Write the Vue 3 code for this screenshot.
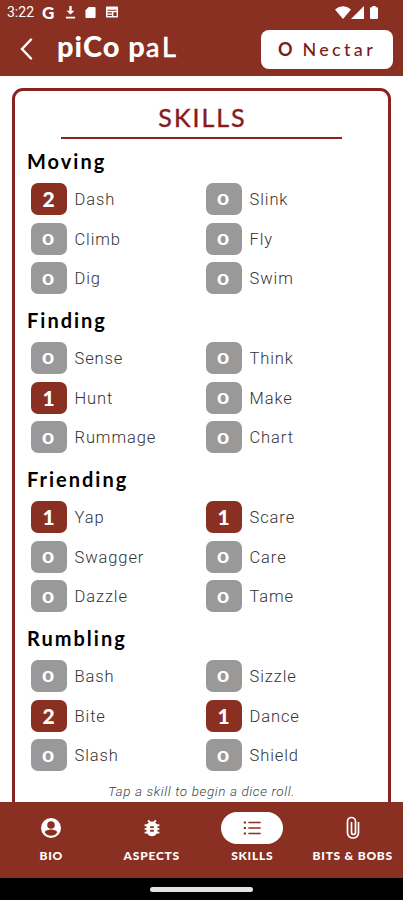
<template>
  <div class="phone">
    <header class="top">
      <div class="status">
        <span class="time">3:22</span>
        <span class="google">G</span>
        <svg class="download" viewBox="0 0 12 14"><path d="M4.7 0h2.6v5h3L6 9.3 1.7 5h3zM1 11.5h10v2H1z" /></svg>
        <svg class="sdcard" viewBox="0 0 12 14"><path d="M4 1h6.5q1 0 1 1v10q0 1-1 1h-9q-1 0-1-1V4.5z" /></svg>
        <svg class="news" viewBox="0 0 14 13">
          <path fill-rule="evenodd" d="M1.5.5h11q1 0 1 1v10q0 1-1 1h-11q-1 0-1-1v-10q0-1 1-1zM2 4v1.2h10V4zM2 6.8V8h5V6.8zM2 9.5v1.2h5V9.5zM8.5 6.8v3.9H12V6.8z" />
        </svg>
        <div class="signals">
          <svg class="wifi" viewBox="0 0 16 13"><path d="M0 3.5Q8-3 16 3.5L8 13z" /></svg>
          <svg class="cell" viewBox="0 0 13 13"><path d="M13 0v13H0z" /></svg>
          <svg class="battery" viewBox="0 0 8 13"><path d="M2.3 0h3.4v1.3H7q1 0 1 1V12q0 1-1 1H1q-1 0-1-1V2.3q0-1 1-1h1.3z" /></svg>
        </div>
      </div>
      <div class="bar">
        <svg class="back" viewBox="0 0 14 22"><path d="M12 1.5 3 11l9 9.5" /></svg>
        <h1><span class="heavy">piCo p</span><span class="thin">aL</span></h1>
        <button class="nectar"><b>O</b><span>Nectar</span></button>
      </div>
    </header>

    <main>
      <section class="card">
        <h2><span>SKILLS</span></h2>
        <div v-for="group in groups" :key="group.name" class="group">
          <h3>{{ group.name }}</h3>
          <div class="grid">
            <div v-for="[name, level] in group.skills" :key="name" class="skill">
              <button class="level" :class="{ trained: level > 0 }"><span>{{ level }}</span></button>
              <span>{{ name }}</span>
            </div>
          </div>
        </div>
        <p class="hint">Tap a skill to begin a dice roll.</p>
      </section>
    </main>

    <nav>
      <a v-for="tab in tabs" :key="tab.label" :class="[tab.icon, { active: tab.label === current }]" @click="current = tab.label">
        <span class="pill">
          <svg v-if="tab.icon === 'bio'" viewBox="0 0 24 24">
            <path d="M12 2a10 10 0 1 0 0 20 10 10 0 0 0 0-20zm0 3.2a3.8 3.8 0 1 1 0 7.6 3.8 3.8 0 0 1 0-7.6zm0 14.6c-2.6 0-4.9-1.3-6.2-3.3.1-2 4.1-2.9 6.2-2.9s6.1.9 6.2 2.9a7.4 7.4 0 0 1-6.2 3.3z" />
          </svg>
          <svg v-else-if="tab.icon === 'bug'" viewBox="0 0 24 24">
            <path d="M20 8h-2.81a6 6 0 0 0-1.82-1.96L17 4.41 15.59 3l-2.17 2.17a6 6 0 0 0-2.83 0L8.41 3 7 4.41l1.62 1.63A6 6 0 0 0 6.81 8H4v2h2.09a6 6 0 0 0-.09 1v1H4v2h2v1q0 .5.09 1H4v2h2.81a6 6 0 0 0 10.38 0H20v-2h-2.09q.09-.5.09-1v-1h2v-2h-2v-1q0-.5-.09-1H20zm-6 8h-4v-2h4zm0-4h-4v-2h4z" />
          </svg>
          <svg v-else-if="tab.icon === 'list'" viewBox="0 0 24 24">
            <path d="M3 5h2.4v2.2H3zm5 .3h13.500v1.600H8zM3 11h2.400v2.200H3zm5 .3h13.500v1.600H8zM3 17h2.400v2.200H3zm5 .3h13.500v1.600H8z" />
          </svg>
          <svg v-else viewBox="0 0 24 24">
            <path class="clip" d="M17.500 6v11a5.500 5 0 0 1-11 0V5.500a4 4 0 0 1 8 0v11a2 2 0 0 1-4 0V6" />
          </svg>
        </span>
        <span class="label">{{ tab.label }}</span>
      </a>
    </nav>
    <footer><i></i></footer>
  </div>
</template>

<script setup>
import { ref } from 'vue'

const current = ref('SKILLS')

const groups = [
  { name: 'Moving', skills: [['Dash', 2], ['Slink', 0], ['Climb', 0], ['Fly', 0], ['Dig', 0], ['Swim', 0]] },
  { name: 'Finding', skills: [['Sense', 0], ['Think', 0], ['Hunt', 1], ['Make', 0], ['Rummage', 0], ['Chart', 0]] },
  { name: 'Friending', skills: [['Yap', 1], ['Scare', 1], ['Swagger', 0], ['Care', 0], ['Dazzle', 0], ['Tame', 0]] },
  { name: 'Rumbling', skills: [['Bash', 0], ['Sizzle', 0], ['Bite', 2], ['Dance', 1], ['Slash', 0], ['Shield', 0]] },
]

const tabs = [
  { label: 'BIO', icon: 'bio' },
  { label: 'ASPECTS', icon: 'bug' },
  { label: 'SKILLS', icon: 'list' },
  { label: 'BITS & BOBS', icon: 'attach' },
]
</script>

<style>
body {
  margin: 0;
}
</style>

<style scoped>
* {
  box-sizing: border-box;
}
.phone {
  width: 403px;
  height: 900px;
  display: flex;
  flex-direction: column;
  overflow: hidden;
  background: #fff;
  font-family: Roboto, sans-serif;
}
h1, h2, h3, p {
  margin: 0;
}
button {
  border: 0;
  padding: 0;
  font-family: inherit;
}
svg {
  display: block;
  fill: currentColor;
  flex: none;
}
.top {
  height: 76px;
  flex: none;
  background: #893023;
  color: #fff;
}
.status {
  height: 24px;
  display: flex;
  align-items: center;
  padding: 0 25px 0 7px;
}
.time {
  width: 35px;
  font-size: 14px;
}
.google {
  width: 23px;
  font: 900 17px Lato, sans-serif;
}
.download {
  width: 11px;
  height: 13px;
  margin-right: 9px;
}
.sdcard {
  width: 11px;
  height: 13px;
  margin-right: 9px;
}
.news {
  width: 14px;
  height: 12px;
}
.signals {
  display: flex;
  margin-left: auto;
}
.wifi {
  width: 16px;
  height: 13px;
}
.cell {
  width: 13px;
  height: 13px;
  margin-right: 6px;
}
.battery {
  width: 8px;
  height: 13px;
}
.bar {
  height: 52px;
  display: flex;
  align-items: center;
  padding: 0 10px 2px 19px;
}
.back {
  width: 14px;
  height: 22px;
  fill: none;
  stroke: #fff;
  stroke-width: 2.4;
  stroke-linecap: round;
}
h1 {
  margin: -5px 0 0 24px;
  font: 29px/34px Lato, sans-serif;
  white-space: nowrap;
}
.heavy {
  font-weight: 900;
  letter-spacing: 1px;
}
.thin {
  font-size: 27px;
  font-weight: 400;
  letter-spacing: 3px;
  -webkit-text-stroke: 0.7px #fff;
}
.nectar {
  width: 132px;
  height: 39px;
  margin-left: auto;
  display: flex;
  align-items: center;
  justify-content: center;
  gap: 10px;
  border-radius: 8px;
  background: #fff;
  color: #7c1c1c;
  font: 500 18px Lato, sans-serif;
  letter-spacing: 3.3px;
}
.nectar b {
  letter-spacing: 0;
}
main {
  flex: 1;
  min-height: 0;
  overflow: hidden;
  padding: 12px 12px 0;
}
.card {
  height: 760px;
  border: 3px solid #872321;
  border-radius: 11px;
  padding: 0 12px;
}
h2 {
  width: 281px;
  height: 48px;
  margin: 0 auto;
  padding-top: 10px;
  border-bottom: 2px solid #872321;
  color: #861c1c;
  font: 25px/32px Lato, sans-serif;
  text-align: center;
}
h2 span {
  padding-left: 2px;
  letter-spacing: 2px;
  -webkit-text-stroke: 0.4px #861c1c;
}
.group {
  height: 159px;
}
h3 {
  height: 40px;
  padding-top: 10px;
  font: bold 20px/24px Lato, sans-serif;
  letter-spacing: 2px;
}
.grid {
  display: grid;
  grid-template-columns: 175px 1fr;
  grid-auto-rows: 39.75px;
  padding: 0 0 0 3.5px;
}
.skill {
  display: flex;
  align-items: center;
  color: #333;
  font-size: 16.5px;
  font-weight: 300;
  letter-spacing: 0.9px;
}
.skill > span {
  padding-top: 1px;
}
.level {
  width: 36px;
  height: 32px;
  margin-right: 8px;
  border-radius: 7px;
  background: #999;
  color: #fff;
  font: bold 15px Inter, sans-serif;
}
/* zeros are drawn round and a little low, like the old-style figures */
.level span {
  display: inline-block;
  transform: translateY(1px) scaleX(1.25);
}
.trained {
  background: #893023;
  font: 900 21px Lato, sans-serif;
}
.trained span {
  transform: none;
}
.hint {
  padding-top: 8px;
  color: #444;
  font-size: 13.5px;
  font-style: italic;
  font-weight: 300;
  letter-spacing: 0.6px;
  text-align: center;
}
nav {
  height: 76px;
  flex: none;
  display: grid;
  grid-template-columns: repeat(4, 1fr);
  padding: 10px 0 0 1px;
  background: #893023;
  color: #fff;
}
nav a {
  display: flex;
  flex-direction: column;
  align-items: center;
}
.pill {
  width: 62px;
  height: 32px;
  display: flex;
  align-items: center;
  justify-content: center;
  border-radius: 16px;
}
.pill svg {
  width: 24px;
  height: 24px;
}
.active .pill {
  background: #fff;
  color: #893023;
}
.list svg,
.bug svg {
  width: 22px;
  height: 22px;
}
.clip {
  fill: none;
  stroke: currentColor;
  stroke-width: 1.7;
}
.label {
  margin-top: 3px;
  font: 900 12px/17px Lato, sans-serif;
  letter-spacing: 0.75px;
  white-space: nowrap;
}
footer {
  height: 22px;
  flex: none;
  display: flex;
  align-items: center;
  justify-content: center;
  background: #000;
}
footer i {
  width: 103px;
  height: 5px;
  border-radius: 3px;
  background: #e3e3e3;
}
</style>
